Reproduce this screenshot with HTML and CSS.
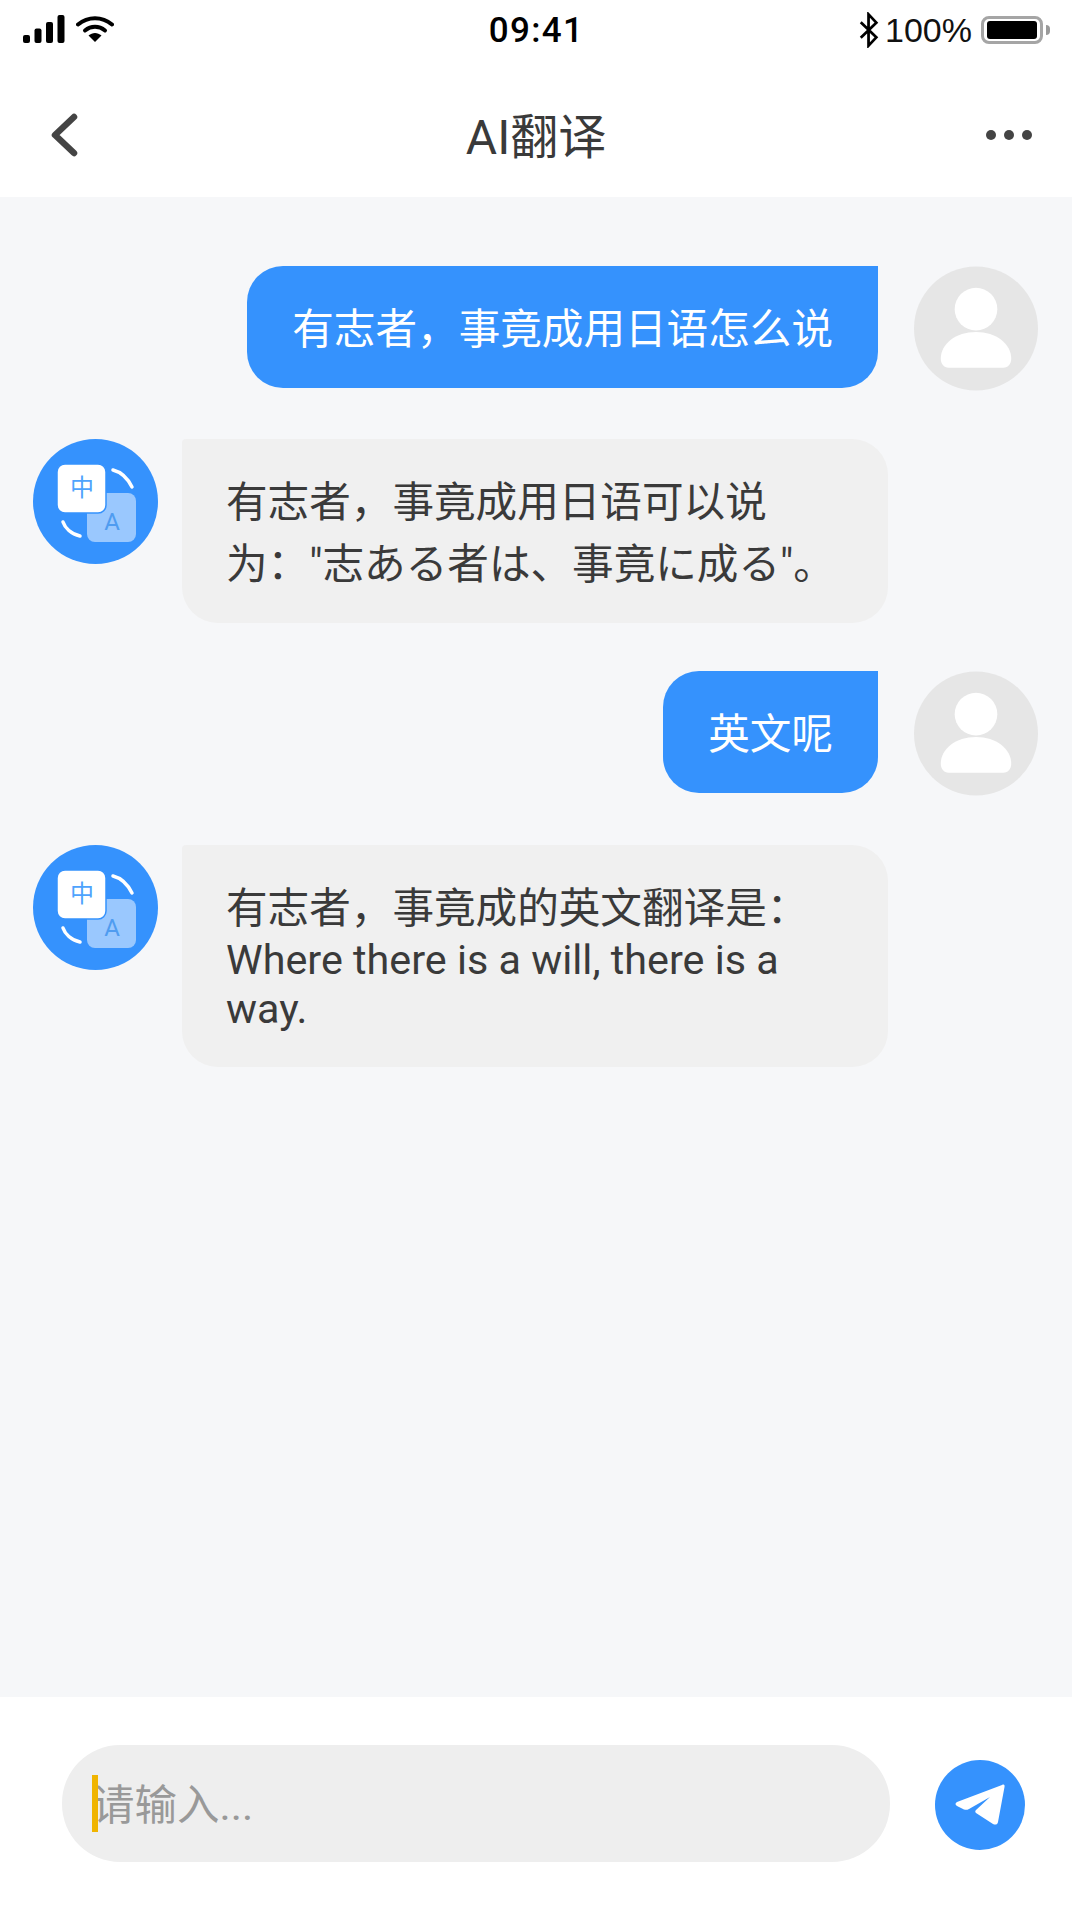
FILE: index.html
```html
<!DOCTYPE html>
<html lang="zh-CN">
<head>
<meta charset="utf-8">
<title>AI翻译</title>
<link rel="stylesheet" href="styles.css">
</head>
<body>
<div class="page">
  <header class="top">
    <div class="status">
      <div class="status-left">
        <svg class="signal" viewBox="0 0 42 28" width="42" height="28"><rect x="0" y="20" width="7" height="8" rx="2"/><rect x="11.500" y="13.500" width="7" height="14.500" rx="2"/><rect x="23" y="7" width="7" height="21" rx="2"/><rect x="34.500" y="0" width="7" height="28" rx="2"/></svg>
        <svg class="wifi" viewBox="0 0 38 28" width="38" height="28"><path d="M2 9.500C12 1 26 1 36 9.500" fill="none" stroke="#000" stroke-width="4" stroke-linecap="round"/><path d="M9 15.500C15 10.500 23 10.500 29 15.500" fill="none" stroke="#000" stroke-width="4" stroke-linecap="round"/><path d="M12.500 20.500C16.500 17 21.500 17 25.500 20.500L19 27Z"/></svg>
      </div>
      <div class="clock">09:41</div>
      <div class="status-right">
        <svg class="bt" viewBox="0 0 24 38" width="22" height="36"><path d="M3 10.500L20 27L11.500 36V2L20 11L3 27.500" fill="none" stroke="#000" stroke-width="3"/></svg>
        <span class="pct">100%</span>
        <div class="battery"><div class="battery-fill"></div></div>
        <div class="battery-cap"></div>
      </div>
    </div>
    <nav class="nav">
      <svg class="back" viewBox="0 0 30 46" width="30" height="46"><path d="M25 5L6 23L25 41" fill="none" stroke="#444" stroke-width="6.500" stroke-linecap="round" stroke-linejoin="round"/></svg>
      <h1 class="title">AI翻译</h1>
      <div class="more"><i></i><i></i><i></i></div>
    </nav>
  </header>

  <main class="chat">
    <div class="row row-user">
      <div class="bubble bubble-user">有志者，事竟成用日语怎么说</div>
      <svg class="avatar" viewBox="0 0 125 125"><circle cx="62.500" cy="62.500" r="62.500" fill="#e6e6e6"/><circle cx="62.500" cy="43" r="21.500" fill="#fff"/><path d="M27 93C27 78 42 66 62.500 66S98 78 98 93C98 98 95 102 90 102H35C30 102 27 98 27 93Z" fill="#fff"/></svg>
    </div>
    <div class="row">
      <svg class="avatar" viewBox="0 0 125 125"><circle cx="62.500" cy="62.500" r="62.500" fill="#3592fd"/><rect x="54" y="54" width="49" height="49" rx="8" fill="#9ac8fe"/><text x="79" y="91" class="glyph" fill="#4f9cf0">A</text><rect x="24" y="25" width="49" height="49" rx="8" fill="#fff" stroke="#3592fd" stroke-width="1.500"/><text x="49" y="57" class="glyph" fill="#4ea3fd">中</text><path d="M80 31C88 33 95 40 99 48" fill="none" stroke="#fff" stroke-width="3.500" stroke-linecap="round"/><path d="M30 83C32 89 38 95 47 97" fill="none" stroke="#fff" stroke-width="3.500" stroke-linecap="round"/></svg>
      <div class="bubble bubble-bot bubble-cjk">有志者，事竟成用日语可以说为："志ある者は、事竟に成る"。</div>
    </div>
    <div class="row row-user">
      <div class="bubble bubble-user">英文呢</div>
      <svg class="avatar" viewBox="0 0 125 125"><circle cx="62.500" cy="62.500" r="62.500" fill="#e6e6e6"/><circle cx="62.500" cy="43" r="21.500" fill="#fff"/><path d="M27 93C27 78 42 66 62.500 66S98 78 98 93C98 98 95 102 90 102H35C30 102 27 98 27 93Z" fill="#fff"/></svg>
    </div>
    <div class="row row-last">
      <svg class="avatar" viewBox="0 0 125 125"><circle cx="62.500" cy="62.500" r="62.500" fill="#3592fd"/><rect x="54" y="54" width="49" height="49" rx="8" fill="#9ac8fe"/><text x="79" y="91" class="glyph" fill="#4f9cf0">A</text><rect x="24" y="25" width="49" height="49" rx="8" fill="#fff" stroke="#3592fd" stroke-width="1.500"/><text x="49" y="57" class="glyph" fill="#4ea3fd">中</text><path d="M80 31C88 33 95 40 99 48" fill="none" stroke="#fff" stroke-width="3.500" stroke-linecap="round"/><path d="M30 83C32 89 38 95 47 97" fill="none" stroke="#fff" stroke-width="3.500" stroke-linecap="round"/></svg>
      <div class="bubble bubble-bot">有志者，事竟成的英文翻译是：<span class="latin">Where there is a will, there is a way.</span></div>
    </div>
  </main>

  <footer class="composer">
    <div class="input"><span class="caret"></span><span class="placeholder">请输入...</span></div>
    <button class="send" type="button">
      <svg viewBox="0 0 90 90" width="90" height="90"><circle cx="45" cy="45" r="45" fill="#3592fd"/><path d="M67 25C69 24 70 25 69.500 27L63 62C62.500 65 60 65 58 64L41 53C40 52 40 51 41 50L55 37L34 49C32 50 31 50 29 49.500L22 46C20 45 20 43 22 42Z" fill="#fff"/></svg>
    </button>
  </footer>
</div>
</body>
</html>
```
FILE: styles.css
```css
* { box-sizing: border-box; }
html, body { margin: 0; padding: 0; }
body {
  width: 1072px;
  height: 1912px;
  background: #fff;
  font-family: Roboto, "Noto Sans CJK SC", sans-serif;
  overflow: hidden;
}
.page {
  display: flex;
  flex-direction: column;
  height: 1912px;
}
.top { height: 197px; background: #fff; flex: none; }
.status {
  height: 60px;
  display: grid;
  grid-template-columns: 1fr auto 1fr;
  align-items: center;
  padding: 0 22px 0 23px;
}
.status-left { display: flex; align-items: center; gap: 11px; margin-bottom: 2px; }
.status-right { display: flex; align-items: center; justify-content: flex-end; }
.clock {
  font-family: Roboto, sans-serif;
  font-weight: 500;
  font-size: 35px;
  letter-spacing: 1.300px;
  color: #000;
  padding-top: 1px;
}
.bt { margin-right: 5px; }
.pct {
  font-family: "Liberation Sans", sans-serif;
  font-size: 34px;
  color: #111;
  margin-right: 9px;
}
.battery {
  width: 62px;
  height: 28px;
  border: 3px solid #a5a5a5;
  border-radius: 8px;
  padding: 2px 3px;
  background: #fff;
}
.battery-fill { width: 100%; height: 100%; background: #000; border-radius: 3px; }
.battery-cap {
  width: 4px;
  height: 10px;
  background: #9a9a9a;
  border-radius: 0 4px 4px 0;
  margin-left: 3px;
}
.nav {
  height: 137px;
  display: grid;
  grid-template-columns: 1fr auto 1fr;
  align-items: center;
  padding: 13px 40px 0;
}
.back { margin-left: 9px; }
.title {
  margin: 0 0 4px;
  font-size: 48px;
  font-weight: 400;
  color: #3a3a3a;
}
.more { display: flex; gap: 8px; justify-self: end; }
.more i { width: 10px; height: 10px; border-radius: 50%; background: #444; display: block; }
.chat {
  flex: 1;
  background: #f6f7f9;
  padding: 69px 34px 0 33px;
  display: flex;
  flex-direction: column;
  gap: 48px;
}
.row { display: flex; align-items: flex-start; gap: 24px; }
.row-user { justify-content: flex-end; gap: 36px; }
.row-user .avatar { width: 124px; }
.row-last { margin-top: 1px; }
.avatar { width: 125px; height: 125px; flex: none; }
.glyph { font-size: 24px; text-anchor: middle; font-family: Roboto, "Noto Sans CJK SC", sans-serif; }
.bubble {
  font-size: 41.600px;
  line-height: normal;
  max-width: 706px;
  border-radius: 36px;
}
.bubble-user {
  background: #3592fd;
  color: #fff;
  border-top-right-radius: 0;
  padding: 30px 45px 32px;
}
.bubble-bot {
  background: #f0f0f0;
  color: #3a3a3a;
  width: 706px;
  border-top-left-radius: 4px;
  padding: 30px 46px 34px 44px;
}
.bubble-cjk { line-height: 62px; padding-top: 33px; padding-bottom: 27px; }
.latin { font-size: 41.300px; }
.composer {
  height: 215px;
  flex: none;
  background: #fff;
  display: flex;
  align-items: flex-start;
  padding: 48px 47px 0 62px;
  justify-content: space-between;
}
.input {
  width: 828px;
  height: 117px;
  border-radius: 58px;
  background: #eeeeee;
  display: flex;
  align-items: center;
  padding: 0 0 4px 30px;
  position: relative;
}
.caret {
  position: absolute;
  left: 30px;
  top: 30px;
  width: 6px;
  height: 57px;
  background: #f0b400;
}
.placeholder { font-size: 42.500px; color: #999; }
.send {
  width: 90px;
  height: 90px;
  padding: 0;
  border: 0;
  background: none;
  margin-top: 15px;
}
.send svg { display: block; }
```
